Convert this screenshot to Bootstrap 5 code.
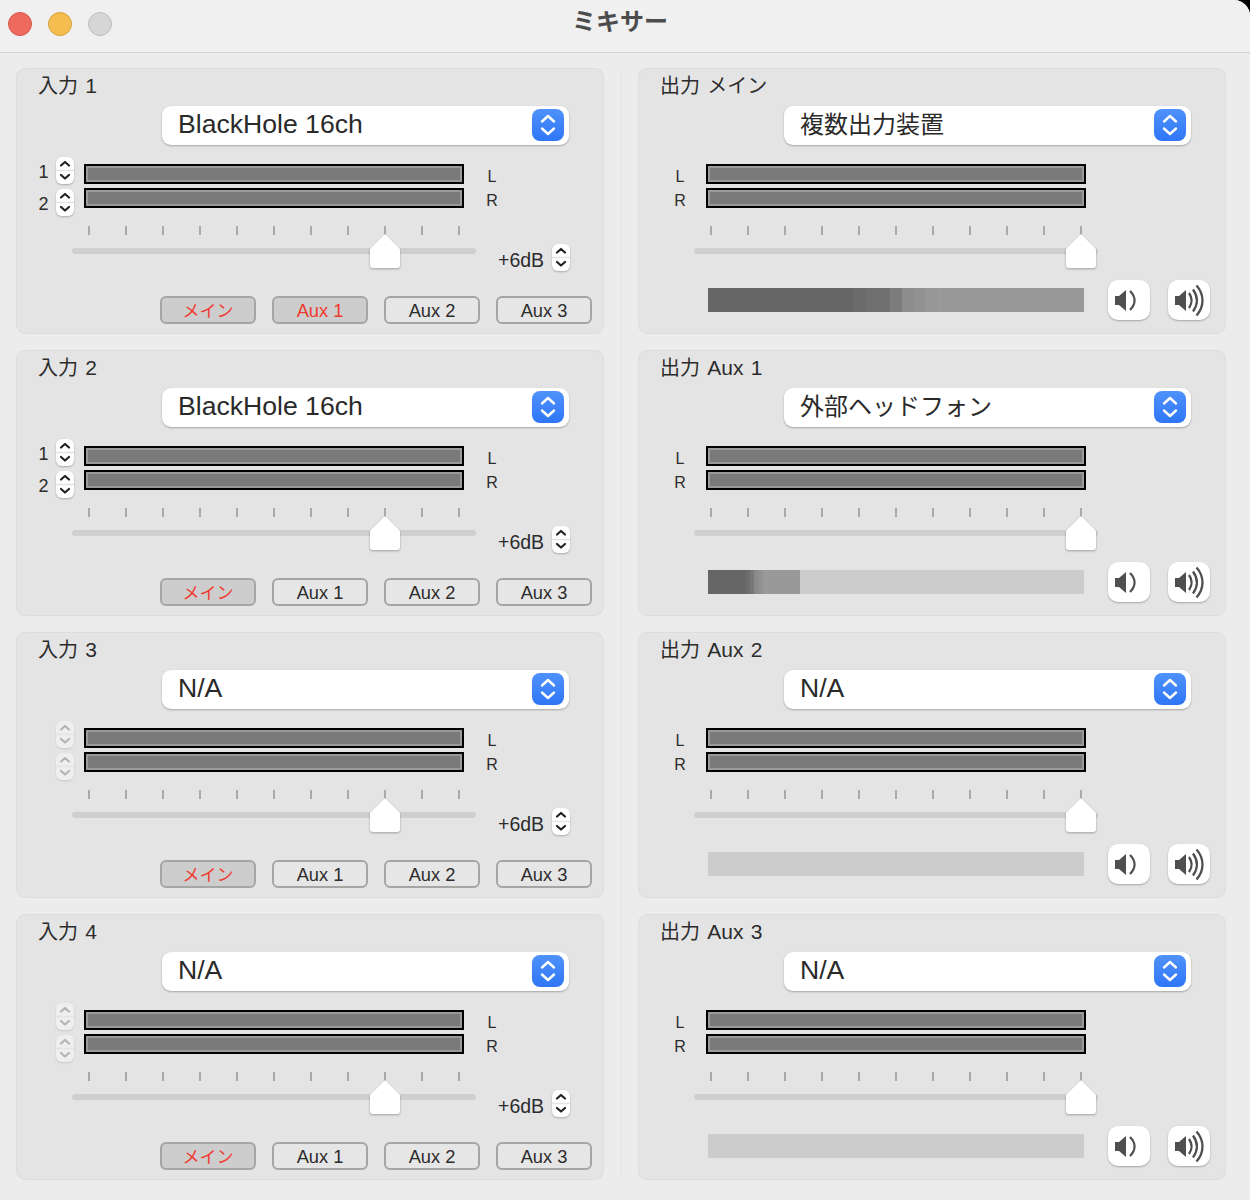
<!DOCTYPE html>
<html lang="ja"><head><meta charset="utf-8"><title>ミキサー</title>
<link href="https://cdn.jsdelivr.net/npm/bootstrap@5.3.0/dist/css/bootstrap.min.css" rel="stylesheet">
<style>
html,body{height:1200px;margin:0;background:#000;overflow:hidden}
body{font-family:"Liberation Sans","Noto Sans CJK JP",sans-serif;color:#2c2c2c}
.win{width:1250px;height:1200px;background:#ececec;border-top-right-radius:16px;overflow:hidden}
.tbar{height:53px;background:#f0f0f0;border-bottom:1px solid #d2d2d2;padding:12px 0 0 8px;gap:16px}
.tl{width:24px;height:24px;border-radius:50%;border:1px solid}
.tl-r{background:#ee6a5f;border-color:#d9554b}.tl-y{background:#f5bd4f;border-color:#d9a03d}.tl-g{background:#d6d6d6;border-color:#bdbdbd}
.ttl{position:absolute;left:0;width:1240px;top:9px;text-align:center;font-size:24px;font-weight:700;color:#4c4c4c;line-height:26px}
.cols{padding:15px 24px 0 16px}
.colm{width:588px;gap:16px}
.vsep{width:1px;background:#e4e4e4;margin:0 16px 0 17px;height:1112px}
.pnl{height:266px;background:#e4e4e4;border:1px solid #dddddd;border-radius:9px;padding:0 0 0 21px}
.ptitle{height:36px;font-size:21px;line-height:33px;word-spacing:1.5px;color:#2c2c2c}
.cj{font-size:20px}
.psel{width:407px;height:39px;margin:1px 0 0 124px;background:#fff;border-radius:9px;box-shadow:0 1px 2px rgba(0,0,0,.28);font-size:26.6px;padding:0 5px 0 16px;color:#2a2a2a}
.psel-txt{padding-bottom:2px}
.psel-cj{font-size:24px}
.psel-btn{width:32px;height:32px;margin-bottom:2px;border-radius:8px;background:linear-gradient(#4f92fb,#2f76f6)}
.mrow{margin-top:12px;height:58px}
.chcol{width:46px}
.chline{height:32px;gap:7px}
.chnum{width:11px;font-size:18px;text-align:center;line-height:30px}
.stp{width:18px;height:27px;background:#fff;border-radius:6px;box-shadow:0 1px 2px rgba(0,0,0,.25)}
.stp svg{display:block}
.stp-on{color:#222}
.stp-off{background:#efefef;box-shadow:0 1px 2px rgba(0,0,0,.12);color:#b4b4b4}
.mcol{margin-top:7px;width:380px;gap:4px}
.mbar{height:20px;border:2px solid #000;background:#7a7a7a;box-shadow:inset 0 0 0 2px #9a9a9a}
.lrcol{margin-top:8px;margin-left:21px;width:14px;font-size:16px;line-height:24px;text-align:center}
.srow{position:relative;height:47px;margin-top:11px;margin-left:34px;width:404px}
.ticks{position:absolute;left:16px;right:16px;top:0;display:flex;justify-content:space-between}
.tick{width:2px;height:9px;background:#a9a9a9}
.track{position:absolute;left:0;right:0;top:22px;height:6px;border-radius:3px;background:#cfcfcf}
.thumb{position:absolute;top:7px;left:297px;width:32px;height:36px;filter:drop-shadow(0 1px 1px rgba(0,0,0,.3))}
.db{position:absolute;left:426px;top:23px;font-size:19.5px;line-height:22px;white-space:nowrap}
.db-stp{position:absolute;left:480px;top:18px}
.brow{margin-top:23px;gap:16px;margin-left:122px}
.brow-btn{width:96px;height:28px;padding:1px 0 0;border:2px solid #a5a5a5;border-radius:6px;font-size:18.3px;line-height:24px;color:#2c2c2c;background:#e6e6e6}
.brow-btn:hover{color:#2c2c2c;background:#e6e6e6;border-color:#a5a5a5}
.brow-btn.on,.brow-btn.on:hover{background:#cdcdcd;color:#f03a2e}
.brow-cj{font-size:17px}
.lr-l{width:24px;margin:8px 14px 0 8px;font-size:16px;line-height:24px;text-align:center}
.p-out .thumb{left:371px}
.orow{margin-top:7px;height:41px;margin-left:48px;width:502px}
.lvl{width:376px;height:24px;background-color:#ccc;margin-top:8px;margin-right:24px;flex:none}
.lvl-a{background-image:linear-gradient(90deg,#666 0,#666 145px,#6b6b6b 145px,#6b6b6b 158px,#707070 158px,#707070 182px,#7c7c7c 182px,#7c7c7c 194px,#8d8d8d 194px,#8d8d8d 206px,#929292 206px,#929292 217px,#969696 217px,#969696 229px,#999 229px,#999 376px)}
.lvl-b{background-image:linear-gradient(90deg,#666 0,#666 38px,#6c6c6c 38px,#6c6c6c 42px,#787878 42px,#787878 46px,#8a8a8a 46px,#8a8a8a 50px,#919191 50px,#919191 55px,#999 55px,#999 92px,transparent 92px)}
.vbtn{width:42px;height:40px;padding:0;background:#fff;border:0;border-radius:10px;box-shadow:0 1px 2px rgba(0,0,0,.28);flex:none}
.vbtn:hover{background:#fff}
.vgap{margin-left:18px}
</style></head><body>
<svg width="0" height="0" class="position-absolute">
<symbol id="chev" viewBox="0 0 18 27"><path d="M0 13.500h18" stroke="#e3e3e3" stroke-width="1.500"/><path d="M5 8.500 9 5l4 3.500M5 18l4 3.500 4-3.500" fill="none" stroke="currentColor" stroke-width="2.200" stroke-linecap="round" stroke-linejoin="round"/></symbol>
<symbol id="selchev" viewBox="0 0 32 32"><path d="M10 12.500 16 7l6 5.500M10 19.500l6 5.500 6-5.500" fill="none" stroke="#fff" stroke-width="2.400" stroke-linecap="round" stroke-linejoin="round"/></symbol>
<symbol id="vlow" viewBox="0 0 42 40"><path d="M7 16h4l7-6v21l-7-6H7z" fill="#4f4f4f"/><path d="M22 11c6 6 6 13 0 19" fill="none" stroke="#4f4f4f" stroke-width="2.300"/></symbol>
<symbol id="vhigh" viewBox="0 0 42 40"><path d="M7 16h4l7-6v21l-7-6H7z" fill="#4f4f4f"/><path d="M21 13c3.500 5 3.500 10 0 15M25 9.500c5 7 5 15 0 22M28.500 5.500c8 9 8 21 0 30" fill="none" stroke="#4f4f4f" stroke-width="2.300"/></symbol>
<symbol id="thm" viewBox="0 0 32 36"><path d="M16 1 31 16v16a3 3 0 0 1-3 3H4a3 3 0 0 1-3-3V16z" fill="#fff"/></symbol>
</svg>
<div class="win">
<div class="tbar d-flex align-items-start position-relative">
<span class="tl tl-r"></span><span class="tl tl-y"></span><span class="tl tl-g"></span>
<div class="ttl">ミキサー</div></div>
<div class="cols d-flex">
<div id="L" class="colm d-flex flex-column"></div>
<div class="vsep"></div>
<div id="R" class="colm d-flex flex-column"></div>
</div></div>
<script>
const st=(off)=>`<div class="stp ${off?'stp-off':'stp-on'}"><svg width="18" height="27"><use href="#chev"/></svg></div>`;
const sel=(t,cj)=>`<div class="psel d-flex align-items-center justify-content-between"><span class="psel-txt ${cj?'psel-cj':''}">${t}</span><span class="psel-btn"><svg width="32" height="32" class="d-block"><use href="#selchev"/></svg></span></div>`;
const ticks='<div class="ticks">'+Array(11).fill('<span class="tick"></span>').join('')+'</div>';
const thm='<svg class="thumb"><use href="#thm"/></svg>';
const meters='<div class="mcol d-flex flex-column"><div class="mbar"></div><div class="mbar"></div></div>';
function inp(n,dev,aux,off){
 const b=['<span class="brow-cj">メイン</span>','Aux 1','Aux 2','Aux 3'].map((x,i)=>`<button class="btn brow-btn ${i==0||(aux&&i==1)?'on':''}">${x}</button>`).join('');
 return `<div class="pnl"><div class="ptitle"><span class="cj">入力</span> ${n}</div>${sel(dev,0)}
 <div class="mrow d-flex align-items-start"><div class="chcol"><div class="chline d-flex"><span class="chnum">${off?'':'1'}</span>${st(off)}</div><div class="chline d-flex"><span class="chnum">${off?'':'2'}</span>${st(off)}</div></div>${meters}<div class="lrcol"><div>L</div><div>R</div></div></div>
 <div class="srow">${ticks}<div class="track"></div>${thm}<div class="db">+6dB</div><div class="db-stp">${st(0)}</div></div>
 <div class="brow d-flex">${b}</div></div>`;
}
function out(n,dev,cj,lv){
 return `<div class="pnl p-out"><div class="ptitle"><span class="cj">出力</span> ${n}</div>${sel(dev,cj)}
 <div class="mrow d-flex align-items-start"><div class="lr-l"><div>L</div><div>R</div></div>${meters}</div>
 <div class="srow">${ticks}<div class="track"></div>${thm}</div>
 <div class="orow d-flex"><div class="lvl ${lv}"></div><button class="btn vbtn"><svg width="42" height="40" class="d-block"><use href="#vlow"/></svg></button><button class="btn vbtn vgap"><svg width="42" height="40" class="d-block"><use href="#vhigh"/></svg></button></div></div>`;
}
document.getElementById('L').innerHTML=inp(1,'BlackHole 16ch',1,0)+inp(2,'BlackHole 16ch',0,0)+inp(3,'N/A',0,1)+inp(4,'N/A',0,1);
document.getElementById('R').innerHTML=out('<span class="cj">メイン</span>','複数出力装置',1,'lvl-a')+out('Aux 1','外部ヘッドフォン',1,'lvl-b')+out('Aux 2','N/A',0,'')+out('Aux 3','N/A',0,'');
</script>
<script src="https://cdn.jsdelivr.net/npm/bootstrap@5.3.0/dist/js/bootstrap.bundle.min.js"></script>
</body></html>
